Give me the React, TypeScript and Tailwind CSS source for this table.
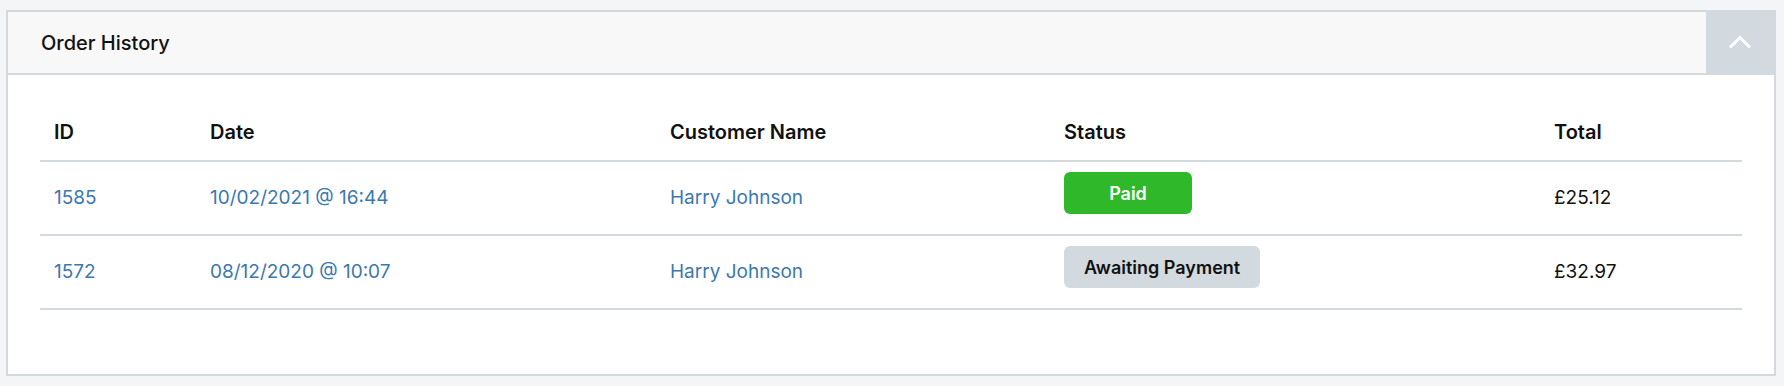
import React from "react";

const rows = [
  { id: "1585", date: "10/02/2021 @ 16:44", name: "Harry Johnson", status: "Paid", total: "£25.12" },
  { id: "1572", date: "08/12/2020 @ 10:07", name: "Harry Johnson", status: "Awaiting Payment", total: "£32.97" },
];

export default function App() {
  return (
    <div
      className="w-[1784px] h-[386px] bg-[#f3f5f7] pt-[10px] pl-[6px]"
      style={{ fontFamily: "Inter, 'Liberation Sans', sans-serif" }}
    >
      <div className="w-[1770px] h-[366px] border-2 border-[#d3dadf] bg-white flex flex-col">
        <div className="h-[63px] flex border-b-2 border-[#d3dadf] bg-[#f8f8f8]">
          <div className="flex-1 flex items-center pl-[33px] pt-[1px] text-[20px] font-medium text-[#111]">
            Order History
          </div>
          <button className="w-[68px] h-[61px] bg-[#d3dadf] flex items-start justify-center pt-[23px]">
            <svg width="22" height="13" viewBox="0 0 22 13" fill="none">
              <path d="M2 11.5 L11 2.5 L20 11.5" stroke="#ffffff" strokeWidth="2.8" strokeLinecap="square" />
            </svg>
          </button>
        </div>
        <div className="px-[32px]">
          <div className="grid grid-cols-[156px_460px_394px_490px_202px] h-[87px] items-end pb-[13px] border-b-2 border-[#d3dadf] text-[20px] font-semibold text-[#111]">
            <div className="pl-[14px]">ID</div>
            <div className="pl-[14px]">Date</div>
            <div className="pl-[14px]">Customer Name</div>
            <div className="pl-[14px]">Status</div>
            <div className="pl-[14px]">Total</div>
          </div>
          {rows.map((r) => (
            <div
              key={r.id}
              className="grid grid-cols-[156px_460px_394px_490px_202px] h-[74px] items-center border-b-2 border-[#d3dadf] text-[19px]"
            >
              <div className="pl-[14px] text-[#3a78b0]">{r.id}</div>
              <div className="pl-[14px] text-[#3a78b0]">{r.date}</div>
              <div className="pl-[14px] text-[#3a78b0]">{r.name}</div>
              <div className="pl-[14px] flex">
                {r.status === "Paid" ? (
                  <span className="mb-[10px] min-w-[128px] h-[42px] rounded-[6px] bg-[#2fb82a] text-white font-semibold text-[18px] flex items-center justify-center px-[20px]">
                    Paid
                  </span>
                ) : (
                  <span className="mb-[10px] min-w-[128px] h-[42px] rounded-[6px] bg-[#d3dadf] text-[#111] font-semibold text-[18px] flex items-center justify-center px-[20px]">
                    Awaiting Payment
                  </span>
                )}
              </div>
              <div className="pl-[14px] text-[#111]">{r.total}</div>
            </div>
          ))}
        </div>
      </div>
    </div>
  );
}
